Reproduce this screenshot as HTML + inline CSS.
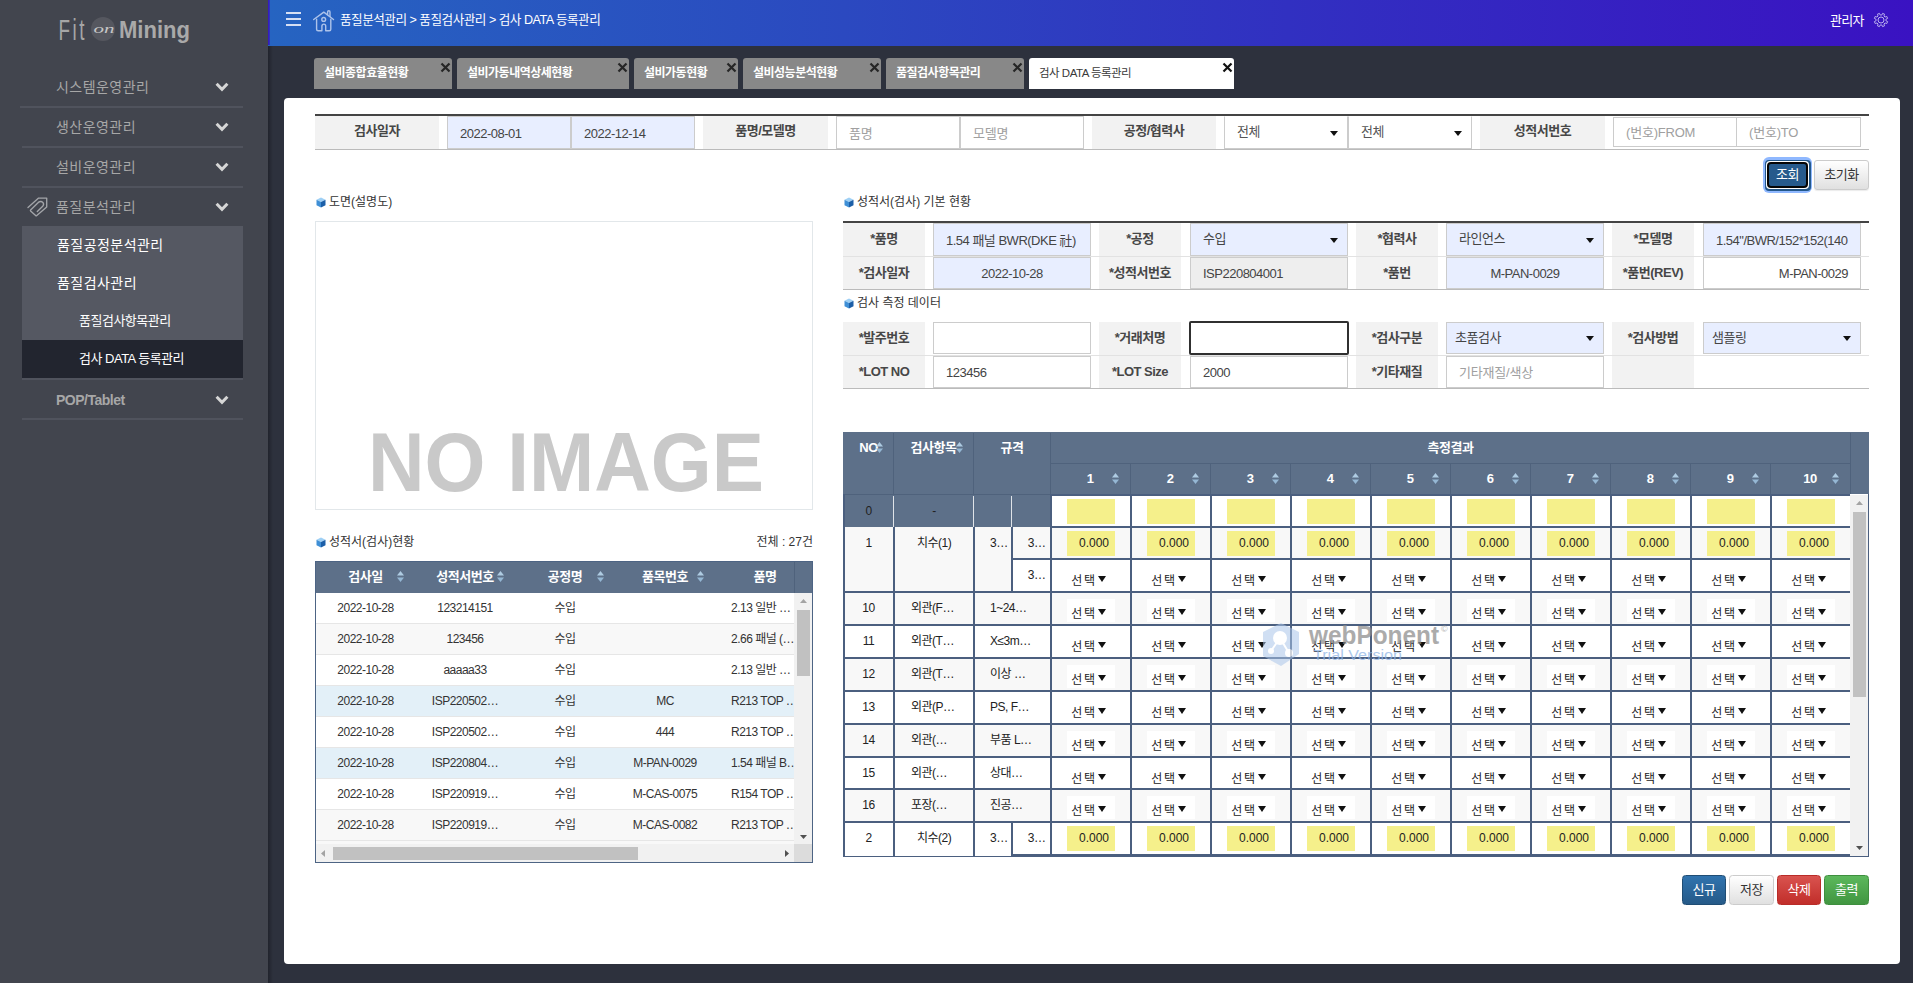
<!DOCTYPE html><html lang="ko"><head><meta charset="utf-8"><title>검사 DATA 등록관리</title><style>
*{box-sizing:border-box;margin:0;padding:0}
html,body{width:1913px;height:983px;overflow:hidden}
body{position:relative;background:#2d313d;font-family:"Liberation Sans","Noto Sans CJK KR",sans-serif;font-size:12px;color:#333;letter-spacing:-0.5px}
.a{position:absolute}
.sb{left:0;top:0;width:268px;height:983px;background:#42454e}
.mi{left:56px;font-size:14px;letter-spacing:0.45px;color:#a7a7a7;height:24px;line-height:24px;white-space:nowrap}
.sep{left:22px;width:221px;height:2px;background:#50535d}
.sm{left:22px;width:221px;background:#555862}
.smt{color:#fff;white-space:nowrap;height:24px;line-height:24px}
.hd{left:268px;top:0;width:1645px;height:46px;background:linear-gradient(90deg,#2664c1 0%,#2b49c0 35%,#3130c1 62%,#3a12c2 100%)}
.bc{color:#fff;font-size:12.6px;white-space:nowrap;line-height:20px;height:20px}
.tab{top:58px;height:31px;background:#888;border-radius:3px 3px 0 0;color:#fff;font-weight:bold;font-size:12px;line-height:30px;padding-left:10px;white-space:nowrap}
.tab.on{background:#fff;color:#3a3a3a;font-weight:normal;font-size:11.5px}
.tx{top:4px;right:1px}
.panel{left:284px;top:98px;width:1616px;height:866px;background:#fff;border-radius:4px}
.lb{background:#f2f2f2;font-weight:bold;color:#474747;text-align:center;white-space:nowrap;font-size:13px}
.in{border:1px solid #ccc;background:#fff;font-size:13px;color:#444;padding-left:12px;white-space:nowrap;overflow:hidden}
.in.b{background:#e8eeff}
.in.g{background:#eee}
.ph{color:#a0a0a0;letter-spacing:-0.2px}
.car{width:0;height:0;border-left:4px solid transparent;border-right:4px solid transparent;border-top:5px solid #111}
.st{font-size:12px;color:#333;white-space:nowrap;height:16px;line-height:16px;letter-spacing:0}
.btn{border-radius:3px;text-align:center;font-size:13px;white-space:nowrap}
.gh{background:#5d7089;color:#fff;font-weight:bold;text-align:center;white-space:nowrap;font-size:12px}
.c{text-align:center;white-space:nowrap;overflow:hidden;font-size:12px;color:#333}
.y{background:#f5f08b}
.ln{background:#4b5f7f}
</style></head><body>
<div class="a sb">
<svg class="a" style="left:50px;top:8px" width="160" height="44" viewBox="0 0 160 44"><text transform="translate(8.4,32) scale(0.65,1)" font-size="29" fill="#a6a6a6" style="letter-spacing:4px">Fit</text><circle cx="53" cy="21" r="12" fill="#55575f"/><text x="43.5" y="25" font-size="13" font-style="italic" font-family="Liberation Serif,serif" fill="#c6c6c6" textLength="21" lengthAdjust="spacingAndGlyphs" style="letter-spacing:0">on</text><text x="69" y="29.6" font-size="24" font-weight="bold" fill="#a9a9a9" textLength="71" lengthAdjust="spacingAndGlyphs" style="letter-spacing:0">Mining</text></svg>
<div class="a mi" style="top:75px">시스템운영관리</div>
<svg class="a" style="left:215px;top:82px" width="14" height="10" viewBox="0 0 14 10"><path d="M1.6 1.8 L7 7.4 L12.4 1.8" fill="none" stroke="#d6d6d6" stroke-width="3"/></svg>
<div class="a mi" style="top:115px">생산운영관리</div>
<svg class="a" style="left:215px;top:122px" width="14" height="10" viewBox="0 0 14 10"><path d="M1.6 1.8 L7 7.4 L12.4 1.8" fill="none" stroke="#d6d6d6" stroke-width="3"/></svg>
<div class="a mi" style="top:155px">설비운영관리</div>
<svg class="a" style="left:215px;top:162px" width="14" height="10" viewBox="0 0 14 10"><path d="M1.6 1.8 L7 7.4 L12.4 1.8" fill="none" stroke="#d6d6d6" stroke-width="3"/></svg>
<div class="a mi" style="top:195px">품질분석관리</div>
<svg class="a" style="left:215px;top:202px" width="14" height="10" viewBox="0 0 14 10"><path d="M1.6 1.8 L7 7.4 L12.4 1.8" fill="none" stroke="#d6d6d6" stroke-width="3"/></svg>
<div class="a sep" style="top:106px;left:20px;width:223px"></div>
<div class="a sep" style="top:146px"></div>
<div class="a sep" style="top:186px"></div>
<svg class="a" style="left:26px;top:196.4px" width="24" height="22" viewBox="0 0 24 22"><path fill="none" stroke="#a3a5a9" stroke-width="1.35" stroke-linejoin="round" stroke-linecap="round" d="M2 11.6 L12.6 2.1 H20.7 V10.9 L10.8 19.6 Q10.2 20.2 9.6 19.6 L4.6 15 Q4.2 14.5 4.6 14 L12.3 6.4 Q14.8 4.6 16.9 6.4 Q18.4 8.4 16.7 10.2 L11.3 15.5"/></svg>
<div class="a sm" style="top:226px;height:114px"></div>
<div class="a smt" style="left:57px;top:233px;font-size:14px;letter-spacing:0.45px">품질공정분석관리</div>
<div class="a smt" style="left:57px;top:271px;font-size:14px;letter-spacing:0.45px">품질검사관리</div>
<div class="a smt" style="left:79px;top:309px;font-size:13px">품질검사항목관리</div>
<div class="a" style="left:22px;top:340px;width:221px;height:38px;background:#22252f"></div>
<div class="a smt" style="left:79px;top:347px;font-size:13px">검사 DATA 등록관리</div>
<div class="a sep" style="top:378px"></div>
<div class="a mi" style="top:388px;font-weight:bold;font-size:14px;letter-spacing:-0.5px">POP/Tablet</div>
<svg class="a" style="left:215px;top:395px" width="14" height="10" viewBox="0 0 14 10"><path d="M1.6 1.8 L7 7.4 L12.4 1.8" fill="none" stroke="#d6d6d6" stroke-width="3"/></svg>
<div class="a sep" style="top:418px"></div>
</div>
<div class="a" style="left:268px;top:0;width:5px;height:983px;background:linear-gradient(90deg,rgba(0,0,0,.28),rgba(0,0,0,0))"></div>
<div class="a hd">
<div class="a" style="left:0;top:0;width:2px;height:45px;background:linear-gradient(90deg,#3a10c0,#2a3fbd)"></div>
<div class="a" style="left:18px;top:12px;width:15px;height:2px;background:#d6dff3"></div>
<div class="a" style="left:18px;top:18px;width:15px;height:2px;background:#d6dff3"></div>
<div class="a" style="left:18px;top:24px;width:15px;height:2px;background:#d6dff3"></div>
<svg class="a" style="left:44px;top:9px" width="24" height="24" viewBox="0 0 24 24"><g fill="none" stroke="#adc3ea" stroke-width="1.4" stroke-linejoin="round" stroke-linecap="round"><path d="M1.7 10.5 L11.8 3.1 L21.5 10.5"/><path d="M15.6 5.6 V3 a1.2 1.2 0 0 1 2.4 0 V7.4"/><path d="M4.6 10.2 V20.3 a1.5 1.5 0 0 0 1.5 1.5 H9.9 V17 a1.9 1.9 0 0 1 3.8 0 V21.8 H17.3 a1.5 1.5 0 0 0 1.5 -1.5 V10.2"/><circle cx="11.7" cy="10.4" r="1.9"/></g></svg>
<div class="a bc" style="left:72px;top:10px">품질분석관리 &gt; 품질검사관리 &gt; 검사 DATA 등록관리</div>
<div class="a bc" style="left:1562px;top:11px;font-size:13px;letter-spacing:-0.7px">관리자</div>
<svg class="a" style="left:1605.3px;top:11.8px" width="16" height="16" viewBox="0 0 16 16"><g fill="none" stroke="#b9aeee" stroke-width="1" stroke-linejoin="round"><circle cx="8" cy="8" r="3"/><path d="M12.94 8.78 L14.61 9.59 L13.80 11.55 L12.05 10.94 L10.94 12.05 L11.55 13.80 L9.59 14.61 L8.78 12.94 L7.22 12.94 L6.41 14.61 L4.45 13.80 L5.06 12.05 L3.95 10.94 L2.20 11.55 L1.39 9.59 L3.06 8.78 L3.06 7.22 L1.39 6.41 L2.20 4.45 L3.95 5.06 L5.06 3.95 L4.45 2.20 L6.41 1.39 L7.22 3.06 L8.78 3.06 L9.59 1.39 L11.55 2.20 L10.94 3.95 L12.05 5.06 L13.80 4.45 L14.61 6.41 L12.94 7.22Z"/></g></svg>
</div>
<div class="a tab" style="left:314px;width:138px">설비종합효율현황<svg class="a tx" width="11" height="11" viewBox="0 0 11 11"><path d="M1.5 1.5 L9.5 9.5 M9.5 1.5 L1.5 9.5" stroke="#262626" stroke-width="2.2" fill="none"/></svg></div>
<div class="a tab" style="left:457px;width:172px">설비가동내역상세현황<svg class="a tx" width="11" height="11" viewBox="0 0 11 11"><path d="M1.5 1.5 L9.5 9.5 M9.5 1.5 L1.5 9.5" stroke="#262626" stroke-width="2.2" fill="none"/></svg></div>
<div class="a tab" style="left:634px;width:104px">설비가동현황<svg class="a tx" width="11" height="11" viewBox="0 0 11 11"><path d="M1.5 1.5 L9.5 9.5 M9.5 1.5 L1.5 9.5" stroke="#262626" stroke-width="2.2" fill="none"/></svg></div>
<div class="a tab" style="left:743px;width:138px">설비성능분석현황<svg class="a tx" width="11" height="11" viewBox="0 0 11 11"><path d="M1.5 1.5 L9.5 9.5 M9.5 1.5 L1.5 9.5" stroke="#262626" stroke-width="2.2" fill="none"/></svg></div>
<div class="a tab" style="left:886px;width:138px">품질검사항목관리<svg class="a tx" width="11" height="11" viewBox="0 0 11 11"><path d="M1.5 1.5 L9.5 9.5 M9.5 1.5 L1.5 9.5" stroke="#262626" stroke-width="2.2" fill="none"/></svg></div>
<div class="a tab on" style="left:1029px;width:205px">검사 DATA 등록관리<svg class="a tx" width="11" height="11" viewBox="0 0 11 11"><path d="M1.5 1.5 L9.5 9.5 M9.5 1.5 L1.5 9.5" stroke="#111" stroke-width="2.2" fill="none"/></svg></div>
<div class="a panel"></div>
<div class="a" style="left:315px;top:114px;width:1554px;height:2px;background:#444"></div>
<div class="a" style="left:315px;top:149px;width:1554px;height:1px;background:#bbb"></div>
<div class="a lb" style="left:315px;top:116px;width:124px;height:33px;line-height:30px">검사일자</div>
<div class="a in b" style="left:447px;top:116px;width:124px;height:33px;line-height:33px;">2022-08-01</div>
<div class="a in b" style="left:571px;top:116px;width:124px;height:33px;line-height:33px;">2022-12-14</div>
<div class="a lb" style="left:703px;top:116px;width:125px;height:33px;line-height:30px">품명/모델명</div>
<div class="a in " style="left:836px;top:116px;width:124px;height:33px;line-height:33px;"><span class="ph">품명</span></div>
<div class="a in " style="left:960px;top:116px;width:124px;height:33px;line-height:33px;"><span class="ph">모델명</span></div>
<div class="a lb" style="left:1092px;top:116px;width:124px;height:33px;line-height:30px">공정/협력사</div>
<div class="a in " style="left:1224px;top:116px;width:124px;height:33px;line-height:30px;border-color:transparent #ccc #ccc #ccc;color:#555;">전체<span class="a car" style="right:9px;top:13.5px"></span></div>
<div class="a in " style="left:1348px;top:116px;width:124px;height:33px;line-height:30px;border-color:transparent #ccc #ccc #ccc;color:#555;">전체<span class="a car" style="right:9px;top:13.5px"></span></div>
<div class="a lb" style="left:1480px;top:116px;width:125px;height:33px;line-height:30px">성적서번호</div>
<div class="a in " style="left:1613px;top:117px;width:124px;height:30px;line-height:30px;"><span class="ph">(번호)FROM</span></div>
<div class="a in " style="left:1736px;top:117px;width:125px;height:30px;line-height:30px;"><span class="ph">(번호)TO</span></div>
<div class="a" style="left:1763px;top:157px;width:49px;height:35.5px;background:#8fb8ff;border-radius:6px"></div>
<div class="a" style="left:1765px;top:159.5px;width:45.5px;height:31px;background:#24588a;border-radius:4px"></div>
<div class="a" style="left:1766px;top:161px;width:43px;height:28px;background:#fff;border-radius:4px"></div>
<div class="a btn" style="left:1767px;top:162px;width:41px;height:26px;background:#265a8c;border:2px solid #050505;border-radius:4px;color:#fff;line-height:22px">조회</div>
<div class="a btn" style="left:1814px;top:160px;width:55px;height:30px;background:linear-gradient(#fff,#e0e0e0);border:1px solid #ccc;color:#333;line-height:28px;box-shadow:0 1px 1px rgba(0,0,0,.08)">초기화</div>
<svg class="a" style="left:316px;top:197px" width="10" height="11" viewBox="0 0 10 11"><path d="M5 0.5 L9.5 2.7 L5 5 L0.5 2.7Z" fill="#9fd0f5"/><path d="M0.5 2.7 L5 5 V10.5 L0.5 8.2Z" fill="#3f8fd6"/><path d="M9.5 2.7 L5 5 V10.5 L9.5 8.2Z" fill="#1c5fa8"/></svg>
<div class="a st" style="left:329px;top:194px">도면(설명도)</div>
<div class="a" style="left:315px;top:221px;width:498px;height:289px;border:1px solid #e2e7ea"></div>
<svg class="a" style="left:360px;top:425px" width="412" height="74" viewBox="0 0 412 74"><text x="8" y="65.5" font-size="84" font-weight="bold" fill="#c9c9c9" textLength="396" lengthAdjust="spacingAndGlyphs" style="letter-spacing:0">NO IMAGE</text></svg>
<svg class="a" style="left:316px;top:537px" width="10" height="11" viewBox="0 0 10 11"><path d="M5 0.5 L9.5 2.7 L5 5 L0.5 2.7Z" fill="#9fd0f5"/><path d="M0.5 2.7 L5 5 V10.5 L0.5 8.2Z" fill="#3f8fd6"/><path d="M9.5 2.7 L5 5 V10.5 L9.5 8.2Z" fill="#1c5fa8"/></svg>
<div class="a st" style="left:329px;top:534px">성적서(검사)현황</div>
<div class="a st" style="left:713px;top:534px;width:100px;text-align:right">전체 : 27건</div>
<div class="a" style="left:315px;top:561px;width:498px;height:302px;background:#fff;border:1px solid #4d6484"></div>
<div class="a gh" style="left:316px;top:562px;width:496px;height:31px"></div>
<div class="a gh" style="left:316px;top:562px;width:100px;height:31px;line-height:30px;border-right:1px solid #4f627c;font-size:13px">검사일</div>
<div class="a gh" style="left:415px;top:562px;width:101px;height:31px;line-height:30px;border-right:1px solid #4f627c;font-size:13px">성적서번호</div>
<div class="a gh" style="left:515px;top:562px;width:101px;height:31px;line-height:30px;border-right:1px solid #4f627c;font-size:13px">공정명</div>
<div class="a gh" style="left:615px;top:562px;width:101px;height:31px;line-height:30px;border-right:1px solid #4f627c;font-size:13px">품목번호</div>
<div class="a gh" style="left:715px;top:562px;width:80px;height:31px;line-height:30px;border-right:1px solid #4f627c;font-size:13px;overflow:hidden"><div style="width:100px">품명</div></div>
<svg class="a" style="left:397px;top:571px" width="7" height="11" viewBox="0 0 7 11"><path d="M3.5 0 L7 4.5 H0Z" fill="#aecbe2"/><path d="M3.5 11 L7 6.5 H0Z" fill="#95b7d4"/></svg>
<svg class="a" style="left:497px;top:571px" width="7" height="11" viewBox="0 0 7 11"><path d="M3.5 0 L7 4.5 H0Z" fill="#aecbe2"/><path d="M3.5 11 L7 6.5 H0Z" fill="#95b7d4"/></svg>
<svg class="a" style="left:597px;top:571px" width="7" height="11" viewBox="0 0 7 11"><path d="M3.5 0 L7 4.5 H0Z" fill="#aecbe2"/><path d="M3.5 11 L7 6.5 H0Z" fill="#95b7d4"/></svg>
<svg class="a" style="left:697px;top:571px" width="7" height="11" viewBox="0 0 7 11"><path d="M3.5 0 L7 4.5 H0Z" fill="#aecbe2"/><path d="M3.5 11 L7 6.5 H0Z" fill="#95b7d4"/></svg>
<div class="a" style="left:316px;top:593px;width:478px;height:31px;background:#fff;border-bottom:1px solid #e6e6e6"></div>
<div class="a c" style="left:316px;top:593px;width:99px;height:30px;line-height:31px">2022-10-28</div>
<div class="a c" style="left:415px;top:593px;width:100px;height:30px;line-height:31px">123214151</div>
<div class="a c" style="left:515px;top:593px;width:100px;height:30px;line-height:31px">수입</div>
<div class="a c" style="left:715px;top:593px;width:79px;height:30px;line-height:31px;text-align:left;padding-left:16px">2.13 일반 …</div>
<div class="a" style="left:316px;top:624px;width:478px;height:31px;background:#f8f8f8;border-bottom:1px solid #e6e6e6"></div>
<div class="a c" style="left:316px;top:624px;width:99px;height:30px;line-height:31px">2022-10-28</div>
<div class="a c" style="left:415px;top:624px;width:100px;height:30px;line-height:31px">123456</div>
<div class="a c" style="left:515px;top:624px;width:100px;height:30px;line-height:31px">수입</div>
<div class="a c" style="left:715px;top:624px;width:79px;height:30px;line-height:31px;text-align:left;padding-left:16px">2.66 패널 (…</div>
<div class="a" style="left:316px;top:655px;width:478px;height:31px;background:#fff;border-bottom:1px solid #e6e6e6"></div>
<div class="a c" style="left:316px;top:655px;width:99px;height:30px;line-height:31px">2022-10-28</div>
<div class="a c" style="left:415px;top:655px;width:100px;height:30px;line-height:31px">aaaaa33</div>
<div class="a c" style="left:515px;top:655px;width:100px;height:30px;line-height:31px">수입</div>
<div class="a c" style="left:715px;top:655px;width:79px;height:30px;line-height:31px;text-align:left;padding-left:16px">2.13 일반 …</div>
<div class="a" style="left:316px;top:686px;width:478px;height:31px;background:#e3f0f8;border-bottom:1px solid #e6e6e6"></div>
<div class="a c" style="left:316px;top:686px;width:99px;height:30px;line-height:31px">2022-10-28</div>
<div class="a c" style="left:415px;top:686px;width:100px;height:30px;line-height:31px">ISP220502…</div>
<div class="a c" style="left:515px;top:686px;width:100px;height:30px;line-height:31px">수입</div>
<div class="a c" style="left:615px;top:686px;width:100px;height:30px;line-height:31px">MC</div>
<div class="a c" style="left:715px;top:686px;width:79px;height:30px;line-height:31px;text-align:left;padding-left:16px">R213 TOP …</div>
<div class="a" style="left:316px;top:717px;width:478px;height:31px;background:#fff;border-bottom:1px solid #e6e6e6"></div>
<div class="a c" style="left:316px;top:717px;width:99px;height:30px;line-height:31px">2022-10-28</div>
<div class="a c" style="left:415px;top:717px;width:100px;height:30px;line-height:31px">ISP220502…</div>
<div class="a c" style="left:515px;top:717px;width:100px;height:30px;line-height:31px">수입</div>
<div class="a c" style="left:615px;top:717px;width:100px;height:30px;line-height:31px">444</div>
<div class="a c" style="left:715px;top:717px;width:79px;height:30px;line-height:31px;text-align:left;padding-left:16px">R213 TOP …</div>
<div class="a" style="left:316px;top:748px;width:478px;height:31px;background:#e3f0f8;border-bottom:1px solid #e6e6e6"></div>
<div class="a c" style="left:316px;top:748px;width:99px;height:30px;line-height:31px">2022-10-28</div>
<div class="a c" style="left:415px;top:748px;width:100px;height:30px;line-height:31px">ISP220804…</div>
<div class="a c" style="left:515px;top:748px;width:100px;height:30px;line-height:31px">수입</div>
<div class="a c" style="left:615px;top:748px;width:100px;height:30px;line-height:31px">M-PAN-0029</div>
<div class="a c" style="left:715px;top:748px;width:79px;height:30px;line-height:31px;text-align:left;padding-left:16px">1.54 패널 B…</div>
<div class="a" style="left:316px;top:779px;width:478px;height:31px;background:#fff;border-bottom:1px solid #e6e6e6"></div>
<div class="a c" style="left:316px;top:779px;width:99px;height:30px;line-height:31px">2022-10-28</div>
<div class="a c" style="left:415px;top:779px;width:100px;height:30px;line-height:31px">ISP220919…</div>
<div class="a c" style="left:515px;top:779px;width:100px;height:30px;line-height:31px">수입</div>
<div class="a c" style="left:615px;top:779px;width:100px;height:30px;line-height:31px">M-CAS-0075</div>
<div class="a c" style="left:715px;top:779px;width:79px;height:30px;line-height:31px;text-align:left;padding-left:16px">R154 TOP …</div>
<div class="a" style="left:316px;top:810px;width:478px;height:31px;background:#f8f8f8;border-bottom:1px solid #e6e6e6"></div>
<div class="a c" style="left:316px;top:810px;width:99px;height:30px;line-height:31px">2022-10-28</div>
<div class="a c" style="left:415px;top:810px;width:100px;height:30px;line-height:31px">ISP220919…</div>
<div class="a c" style="left:515px;top:810px;width:100px;height:30px;line-height:31px">수입</div>
<div class="a c" style="left:615px;top:810px;width:100px;height:30px;line-height:31px">M-CAS-0082</div>
<div class="a c" style="left:715px;top:810px;width:79px;height:30px;line-height:31px;text-align:left;padding-left:16px">R213 TOP …</div>
<div class="a" style="left:316px;top:841px;width:478px;height:3px;background:#f8f8f8"></div>
<div class="a" style="left:794px;top:593px;width:18px;height:251px;background:#f1f1f1"></div>
<div class="a" style="left:797px;top:610px;width:13px;height:66px;background:#c1c1c1"></div>
<div class="a" style="left:316px;top:844px;width:496px;height:18px;background:#f1f1f1"></div>
<div class="a" style="left:794px;top:844px;width:18px;height:18px;background:#dcdcdc"></div>
<div class="a" style="left:333px;top:847px;width:305px;height:13px;background:#c1c1c1"></div>
<svg class="a" style="left:799px;top:597px" width="9" height="9" viewBox="0 0 9 9"><path d="M4.5 2 L8 6 H1Z" fill="#a3a3a3"/></svg>
<svg class="a" style="left:799px;top:832px" width="9" height="9" viewBox="0 0 9 9"><path d="M4.5 7 L8 3 H1Z" fill="#505050"/></svg>
<svg class="a" style="left:319px;top:849px" width="9" height="9" viewBox="0 0 9 9"><path d="M2 4.5 L6 1 V8Z" fill="#a3a3a3"/></svg>
<svg class="a" style="left:782px;top:849px" width="9" height="9" viewBox="0 0 9 9"><path d="M7 4.5 L3 1 V8Z" fill="#505050"/></svg>
<svg class="a" style="left:844px;top:197px" width="10" height="11" viewBox="0 0 10 11"><path d="M5 0.5 L9.5 2.7 L5 5 L0.5 2.7Z" fill="#9fd0f5"/><path d="M0.5 2.7 L5 5 V10.5 L0.5 8.2Z" fill="#3f8fd6"/><path d="M9.5 2.7 L5 5 V10.5 L9.5 8.2Z" fill="#1c5fa8"/></svg>
<div class="a st" style="left:857px;top:194px">성적서(검사) 기본 현황</div>
<div class="a" style="left:843px;top:221px;width:1026px;height:2px;background:#444"></div>
<div class="a" style="left:843px;top:256px;width:1026px;height:1px;background:#e2e2e2"></div>
<div class="a" style="left:843px;top:289px;width:1026px;height:1px;background:#bbb"></div>
<div class="a lb" style="left:843px;top:223px;width:82px;height:33px;line-height:32px">*품명</div>
<div class="a lb" style="left:1099px;top:223px;width:82px;height:33px;line-height:32px">*공정</div>
<div class="a lb" style="left:1356px;top:223px;width:82px;height:33px;line-height:32px">*협력사</div>
<div class="a lb" style="left:1612px;top:223px;width:82px;height:33px;line-height:32px">*모델명</div>
<div class="a lb" style="left:843px;top:257px;width:82px;height:32px;line-height:31px">*검사일자</div>
<div class="a lb" style="left:1099px;top:257px;width:82px;height:32px;line-height:31px">*성적서번호</div>
<div class="a lb" style="left:1356px;top:257px;width:82px;height:32px;line-height:31px">*품번</div>
<div class="a lb" style="left:1612px;top:257px;width:82px;height:32px;line-height:31px">*품번(REV)</div>
<div class="a in b" style="left:933px;top:223px;width:158px;height:33px;line-height:33px;">1.54 패널 BWR(DKE 社)</div>
<div class="a in b" style="left:1190px;top:223px;width:158px;height:33px;line-height:30px;">수입<span class="a car" style="right:9px;top:13.5px"></span></div>
<div class="a in b" style="left:1446px;top:223px;width:158px;height:33px;line-height:30px;">라인언스<span class="a car" style="right:9px;top:13.5px"></span></div>
<div class="a in b" style="left:1703px;top:223px;width:158px;height:33px;line-height:33px;">1.54"/BWR/152*152(140</div>
<div class="a in b" style="left:933px;top:257px;width:158px;height:32px;line-height:32px;text-align:center;padding-left:0;">2022-10-28</div>
<div class="a in g" style="left:1190px;top:257px;width:158px;height:32px;line-height:32px;">ISP220804001</div>
<div class="a in b" style="left:1446px;top:257px;width:158px;height:32px;line-height:32px;text-align:center;padding-left:0;">M-PAN-0029</div>
<div class="a in " style="left:1703px;top:257px;width:158px;height:32px;line-height:32px;text-align:right;padding-left:0;padding-right:12px;">M-PAN-0029</div>
<svg class="a" style="left:844px;top:298px" width="10" height="11" viewBox="0 0 10 11"><path d="M5 0.5 L9.5 2.7 L5 5 L0.5 2.7Z" fill="#9fd0f5"/><path d="M0.5 2.7 L5 5 V10.5 L0.5 8.2Z" fill="#3f8fd6"/><path d="M9.5 2.7 L5 5 V10.5 L9.5 8.2Z" fill="#1c5fa8"/></svg>
<div class="a st" style="left:857px;top:295px">검사 측정 데이터</div>
<div class="a" style="left:843px;top:355px;width:1026px;height:1px;background:#e2e2e2"></div>
<div class="a" style="left:843px;top:388px;width:1026px;height:1px;background:#bbb"></div>
<div class="a lb" style="left:843px;top:322px;width:82px;height:33px;line-height:32px">*발주번호</div>
<div class="a lb" style="left:1099px;top:322px;width:82px;height:33px;line-height:32px">*거래처명</div>
<div class="a lb" style="left:1356px;top:322px;width:82px;height:33px;line-height:32px">*검사구분</div>
<div class="a lb" style="left:1612px;top:322px;width:82px;height:33px;line-height:32px">*검사방법</div>
<div class="a lb" style="left:843px;top:356px;width:82px;height:32px;line-height:31px">*LOT NO</div>
<div class="a lb" style="left:1099px;top:356px;width:82px;height:32px;line-height:31px">*LOT Size</div>
<div class="a lb" style="left:1356px;top:356px;width:82px;height:32px;line-height:31px">*기타재질</div>
<div class="a lb" style="left:1612px;top:356px;width:82px;height:32px;line-height:31px"></div>
<div class="a in " style="left:933px;top:322px;width:158px;height:32px;line-height:32px;"></div>
<div class="a in " style="left:1189px;top:321px;width:160px;height:34px;line-height:34px;border:2px solid #303030;border-radius:2px;"></div>
<div class="a in b" style="left:1446px;top:322px;width:158px;height:32px;line-height:29px;padding-left:8px;">초품검사<span class="a car" style="right:9px;top:13px"></span></div>
<div class="a in b" style="left:1703px;top:322px;width:158px;height:32px;line-height:29px;padding-left:8px;">샘플링<span class="a car" style="right:9px;top:13px"></span></div>
<div class="a in " style="left:933px;top:356px;width:158px;height:32px;line-height:32px;">123456</div>
<div class="a in " style="left:1190px;top:356px;width:158px;height:32px;line-height:32px;">2000</div>
<div class="a in " style="left:1446px;top:356px;width:158px;height:32px;line-height:32px;"><span class="ph">기타재질/색상</span></div>
<div class="a" style="left:843px;top:432px;width:1026px;height:425px;background:#fff;border:1px solid #4b5f7f;border-left-width:2px"></div>
<div class="a gh" style="left:843px;top:432px;width:1026px;height:62px"></div>
<div class="a gh" style="left:844px;top:433px;width:49px;height:30px;line-height:30px;font-size:13px">NO</div>
<div class="a gh" style="left:894px;top:433px;width:79px;height:30px;line-height:30px;font-size:13px">검사항목</div>
<div class="a gh" style="left:974px;top:433px;width:76px;height:30px;line-height:30px;font-size:13px">규격</div>
<div class="a gh" style="left:1051px;top:433px;width:799px;height:30px;line-height:30px;font-size:13px">측정결과</div>
<svg class="a" style="left:876px;top:442px" width="7" height="11" viewBox="0 0 7 11"><path d="M3.5 0 L7 4.5 H0Z" fill="#aecbe2"/><path d="M3.5 11 L7 6.5 H0Z" fill="#95b7d4"/></svg>
<svg class="a" style="left:955.5px;top:442px" width="7" height="11" viewBox="0 0 7 11"><path d="M3.5 0 L7 4.5 H0Z" fill="#aecbe2"/><path d="M3.5 11 L7 6.5 H0Z" fill="#95b7d4"/></svg>
<div class="a" style="left:893px;top:433px;width:1px;height:61px;background:#4f627c"></div>
<div class="a" style="left:973px;top:433px;width:1px;height:61px;background:#4f627c"></div>
<div class="a" style="left:1050px;top:433px;width:1px;height:61px;background:#4f627c"></div>
<div class="a" style="left:1850px;top:433px;width:1px;height:61px;background:#4f627c"></div>
<div class="a" style="left:1051px;top:463px;width:800px;height:1px;background:#4f627c"></div>
<div class="a gh" style="left:1075px;top:464px;width:30px;height:30px;line-height:29px;font-size:13px;background:none">1</div>
<svg class="a" style="left:1112px;top:473px" width="7" height="11" viewBox="0 0 7 11"><path d="M3.5 0 L7 4.5 H0Z" fill="#aecbe2"/><path d="M3.5 11 L7 6.5 H0Z" fill="#95b7d4"/></svg>
<div class="a" style="left:1130px;top:464px;width:1px;height:30px;background:#4f627c"></div>
<div class="a gh" style="left:1155px;top:464px;width:30px;height:30px;line-height:29px;font-size:13px;background:none">2</div>
<svg class="a" style="left:1192px;top:473px" width="7" height="11" viewBox="0 0 7 11"><path d="M3.5 0 L7 4.5 H0Z" fill="#aecbe2"/><path d="M3.5 11 L7 6.5 H0Z" fill="#95b7d4"/></svg>
<div class="a" style="left:1210px;top:464px;width:1px;height:30px;background:#4f627c"></div>
<div class="a gh" style="left:1235px;top:464px;width:30px;height:30px;line-height:29px;font-size:13px;background:none">3</div>
<svg class="a" style="left:1272px;top:473px" width="7" height="11" viewBox="0 0 7 11"><path d="M3.5 0 L7 4.5 H0Z" fill="#aecbe2"/><path d="M3.5 11 L7 6.5 H0Z" fill="#95b7d4"/></svg>
<div class="a" style="left:1290px;top:464px;width:1px;height:30px;background:#4f627c"></div>
<div class="a gh" style="left:1315px;top:464px;width:30px;height:30px;line-height:29px;font-size:13px;background:none">4</div>
<svg class="a" style="left:1352px;top:473px" width="7" height="11" viewBox="0 0 7 11"><path d="M3.5 0 L7 4.5 H0Z" fill="#aecbe2"/><path d="M3.5 11 L7 6.5 H0Z" fill="#95b7d4"/></svg>
<div class="a" style="left:1370px;top:464px;width:1px;height:30px;background:#4f627c"></div>
<div class="a gh" style="left:1395px;top:464px;width:30px;height:30px;line-height:29px;font-size:13px;background:none">5</div>
<svg class="a" style="left:1432px;top:473px" width="7" height="11" viewBox="0 0 7 11"><path d="M3.5 0 L7 4.5 H0Z" fill="#aecbe2"/><path d="M3.5 11 L7 6.5 H0Z" fill="#95b7d4"/></svg>
<div class="a" style="left:1450px;top:464px;width:1px;height:30px;background:#4f627c"></div>
<div class="a gh" style="left:1475px;top:464px;width:30px;height:30px;line-height:29px;font-size:13px;background:none">6</div>
<svg class="a" style="left:1512px;top:473px" width="7" height="11" viewBox="0 0 7 11"><path d="M3.5 0 L7 4.5 H0Z" fill="#aecbe2"/><path d="M3.5 11 L7 6.5 H0Z" fill="#95b7d4"/></svg>
<div class="a" style="left:1530px;top:464px;width:1px;height:30px;background:#4f627c"></div>
<div class="a gh" style="left:1555px;top:464px;width:30px;height:30px;line-height:29px;font-size:13px;background:none">7</div>
<svg class="a" style="left:1592px;top:473px" width="7" height="11" viewBox="0 0 7 11"><path d="M3.5 0 L7 4.5 H0Z" fill="#aecbe2"/><path d="M3.5 11 L7 6.5 H0Z" fill="#95b7d4"/></svg>
<div class="a" style="left:1610px;top:464px;width:1px;height:30px;background:#4f627c"></div>
<div class="a gh" style="left:1635px;top:464px;width:30px;height:30px;line-height:29px;font-size:13px;background:none">8</div>
<svg class="a" style="left:1672px;top:473px" width="7" height="11" viewBox="0 0 7 11"><path d="M3.5 0 L7 4.5 H0Z" fill="#aecbe2"/><path d="M3.5 11 L7 6.5 H0Z" fill="#95b7d4"/></svg>
<div class="a" style="left:1690px;top:464px;width:1px;height:30px;background:#4f627c"></div>
<div class="a gh" style="left:1715px;top:464px;width:30px;height:30px;line-height:29px;font-size:13px;background:none">9</div>
<svg class="a" style="left:1752px;top:473px" width="7" height="11" viewBox="0 0 7 11"><path d="M3.5 0 L7 4.5 H0Z" fill="#aecbe2"/><path d="M3.5 11 L7 6.5 H0Z" fill="#95b7d4"/></svg>
<div class="a" style="left:1770px;top:464px;width:1px;height:30px;background:#4f627c"></div>
<div class="a gh" style="left:1795px;top:464px;width:30px;height:30px;line-height:29px;font-size:13px;background:none">10</div>
<svg class="a" style="left:1832px;top:473px" width="7" height="11" viewBox="0 0 7 11"><path d="M3.5 0 L7 4.5 H0Z" fill="#aecbe2"/><path d="M3.5 11 L7 6.5 H0Z" fill="#95b7d4"/></svg>
<div class="a" style="left:845px;top:494px;width:205px;height:33px;background:#5d7089"></div>
<div class="a" style="left:845px;top:494px;width:205px;height:1px;background:#4f627c"></div>
<div class="a" style="left:893px;top:496px;width:1px;height:31px;background:#dfe3e8"></div>
<div class="a" style="left:973px;top:496px;width:1px;height:31px;background:#dfe3e8"></div>
<div class="a" style="left:1011px;top:496px;width:1px;height:31px;background:#dfe3e8"></div>
<div class="a" style="left:845px;top:527px;width:1005px;height:32px;background:#f8f8f8"></div>
<div class="a" style="left:845px;top:559px;width:166px;height:33px;background:#f8f8f8"></div>
<div class="a" style="left:845px;top:592px;width:1005px;height:33px;background:#f8f8f8"></div>
<div class="a" style="left:845px;top:658px;width:1005px;height:33px;background:#f8f8f8"></div>
<div class="a" style="left:845px;top:724px;width:1005px;height:33px;background:#f8f8f8"></div>
<div class="a" style="left:845px;top:789px;width:1005px;height:33px;background:#f8f8f8"></div>
<div class="a ln" style="left:1050px;top:494px;width:800px;height:2px"></div>
<div class="a ln" style="left:1050px;top:526px;width:800px;height:2px"></div>
<div class="a ln" style="left:1011px;top:558px;width:839px;height:2px"></div>
<div class="a ln" style="left:845px;top:591px;width:1005px;height:2px"></div>
<div class="a ln" style="left:845px;top:624px;width:1005px;height:2px"></div>
<div class="a ln" style="left:845px;top:657px;width:1005px;height:2px"></div>
<div class="a ln" style="left:845px;top:690px;width:1005px;height:2px"></div>
<div class="a ln" style="left:845px;top:723px;width:1005px;height:2px"></div>
<div class="a ln" style="left:845px;top:756px;width:1005px;height:2px"></div>
<div class="a ln" style="left:845px;top:788px;width:1005px;height:2px"></div>
<div class="a ln" style="left:845px;top:821px;width:1005px;height:2px"></div>
<div class="a ln" style="left:1011px;top:854px;width:839px;height:2px"></div>
<div class="a ln" style="left:1050px;top:494px;width:2px;height:362px"></div>
<div class="a ln" style="left:1130px;top:494px;width:2px;height:362px"></div>
<div class="a ln" style="left:1210px;top:494px;width:2px;height:362px"></div>
<div class="a ln" style="left:1290px;top:494px;width:2px;height:362px"></div>
<div class="a ln" style="left:1370px;top:494px;width:2px;height:362px"></div>
<div class="a ln" style="left:1450px;top:494px;width:2px;height:362px"></div>
<div class="a ln" style="left:1530px;top:494px;width:2px;height:362px"></div>
<div class="a ln" style="left:1610px;top:494px;width:2px;height:362px"></div>
<div class="a ln" style="left:1690px;top:494px;width:2px;height:362px"></div>
<div class="a ln" style="left:1770px;top:494px;width:2px;height:362px"></div>
<div class="a ln" style="left:893px;top:527px;width:2px;height:329px"></div>
<div class="a ln" style="left:973px;top:527px;width:2px;height:329px"></div>
<div class="a ln" style="left:1011px;top:527px;width:2px;height:64px"></div>
<div class="a ln" style="left:1011px;top:823px;width:2px;height:33px"></div>
<div class="a c y" style="left:1067px;top:499px;width:48px;height:25px;line-height:25px;text-align:right;padding-right:6px;color:#222;letter-spacing:0"></div>
<div class="a c y" style="left:1067px;top:531px;width:48px;height:25px;line-height:25px;text-align:right;padding-right:6px;color:#222;letter-spacing:0">0.000</div>
<div class="a c" style="left:1067px;top:572px;width:34px;height:18px;line-height:18px;color:#222;font-size:12px;letter-spacing:1.6px;overflow:visible">선택</div>
<span class="a car" style="left:1098px;top:576px;border-top-width:6px;border-left-width:4.5px;border-right-width:4.5px"></span>
<div class="a" style="left:1067px;top:599px;width:48px;height:23px;background:#fff"></div>
<div class="a c" style="left:1067px;top:605px;width:34px;height:18px;line-height:18px;color:#222;font-size:12px;letter-spacing:1.6px;overflow:visible">선택</div>
<span class="a car" style="left:1098px;top:609px;border-top-width:6px;border-left-width:4.5px;border-right-width:4.5px"></span>
<div class="a c" style="left:1067px;top:638px;width:34px;height:18px;line-height:18px;color:#222;font-size:12px;letter-spacing:1.6px;overflow:visible">선택</div>
<span class="a car" style="left:1098px;top:642px;border-top-width:6px;border-left-width:4.5px;border-right-width:4.5px"></span>
<div class="a" style="left:1067px;top:665px;width:48px;height:23px;background:#fff"></div>
<div class="a c" style="left:1067px;top:671px;width:34px;height:18px;line-height:18px;color:#222;font-size:12px;letter-spacing:1.6px;overflow:visible">선택</div>
<span class="a car" style="left:1098px;top:675px;border-top-width:6px;border-left-width:4.5px;border-right-width:4.5px"></span>
<div class="a c" style="left:1067px;top:704px;width:34px;height:18px;line-height:18px;color:#222;font-size:12px;letter-spacing:1.6px;overflow:visible">선택</div>
<span class="a car" style="left:1098px;top:708px;border-top-width:6px;border-left-width:4.5px;border-right-width:4.5px"></span>
<div class="a" style="left:1067px;top:731px;width:48px;height:23px;background:#fff"></div>
<div class="a c" style="left:1067px;top:737px;width:34px;height:18px;line-height:18px;color:#222;font-size:12px;letter-spacing:1.6px;overflow:visible">선택</div>
<span class="a car" style="left:1098px;top:741px;border-top-width:6px;border-left-width:4.5px;border-right-width:4.5px"></span>
<div class="a c" style="left:1067px;top:770px;width:34px;height:18px;line-height:18px;color:#222;font-size:12px;letter-spacing:1.6px;overflow:visible">선택</div>
<span class="a car" style="left:1098px;top:774px;border-top-width:6px;border-left-width:4.5px;border-right-width:4.5px"></span>
<div class="a" style="left:1067px;top:796px;width:48px;height:23px;background:#fff"></div>
<div class="a c" style="left:1067px;top:802px;width:34px;height:18px;line-height:18px;color:#222;font-size:12px;letter-spacing:1.6px;overflow:visible">선택</div>
<span class="a car" style="left:1098px;top:806px;border-top-width:6px;border-left-width:4.5px;border-right-width:4.5px"></span>
<div class="a c y" style="left:1067px;top:826px;width:48px;height:25px;line-height:25px;text-align:right;padding-right:6px;color:#222;letter-spacing:0">0.000</div>
<div class="a c y" style="left:1147px;top:499px;width:48px;height:25px;line-height:25px;text-align:right;padding-right:6px;color:#222;letter-spacing:0"></div>
<div class="a c y" style="left:1147px;top:531px;width:48px;height:25px;line-height:25px;text-align:right;padding-right:6px;color:#222;letter-spacing:0">0.000</div>
<div class="a c" style="left:1147px;top:572px;width:34px;height:18px;line-height:18px;color:#222;font-size:12px;letter-spacing:1.6px;overflow:visible">선택</div>
<span class="a car" style="left:1178px;top:576px;border-top-width:6px;border-left-width:4.5px;border-right-width:4.5px"></span>
<div class="a" style="left:1147px;top:599px;width:48px;height:23px;background:#fff"></div>
<div class="a c" style="left:1147px;top:605px;width:34px;height:18px;line-height:18px;color:#222;font-size:12px;letter-spacing:1.6px;overflow:visible">선택</div>
<span class="a car" style="left:1178px;top:609px;border-top-width:6px;border-left-width:4.5px;border-right-width:4.5px"></span>
<div class="a c" style="left:1147px;top:638px;width:34px;height:18px;line-height:18px;color:#222;font-size:12px;letter-spacing:1.6px;overflow:visible">선택</div>
<span class="a car" style="left:1178px;top:642px;border-top-width:6px;border-left-width:4.5px;border-right-width:4.5px"></span>
<div class="a" style="left:1147px;top:665px;width:48px;height:23px;background:#fff"></div>
<div class="a c" style="left:1147px;top:671px;width:34px;height:18px;line-height:18px;color:#222;font-size:12px;letter-spacing:1.6px;overflow:visible">선택</div>
<span class="a car" style="left:1178px;top:675px;border-top-width:6px;border-left-width:4.5px;border-right-width:4.5px"></span>
<div class="a c" style="left:1147px;top:704px;width:34px;height:18px;line-height:18px;color:#222;font-size:12px;letter-spacing:1.6px;overflow:visible">선택</div>
<span class="a car" style="left:1178px;top:708px;border-top-width:6px;border-left-width:4.5px;border-right-width:4.5px"></span>
<div class="a" style="left:1147px;top:731px;width:48px;height:23px;background:#fff"></div>
<div class="a c" style="left:1147px;top:737px;width:34px;height:18px;line-height:18px;color:#222;font-size:12px;letter-spacing:1.6px;overflow:visible">선택</div>
<span class="a car" style="left:1178px;top:741px;border-top-width:6px;border-left-width:4.5px;border-right-width:4.5px"></span>
<div class="a c" style="left:1147px;top:770px;width:34px;height:18px;line-height:18px;color:#222;font-size:12px;letter-spacing:1.6px;overflow:visible">선택</div>
<span class="a car" style="left:1178px;top:774px;border-top-width:6px;border-left-width:4.5px;border-right-width:4.5px"></span>
<div class="a" style="left:1147px;top:796px;width:48px;height:23px;background:#fff"></div>
<div class="a c" style="left:1147px;top:802px;width:34px;height:18px;line-height:18px;color:#222;font-size:12px;letter-spacing:1.6px;overflow:visible">선택</div>
<span class="a car" style="left:1178px;top:806px;border-top-width:6px;border-left-width:4.5px;border-right-width:4.5px"></span>
<div class="a c y" style="left:1147px;top:826px;width:48px;height:25px;line-height:25px;text-align:right;padding-right:6px;color:#222;letter-spacing:0">0.000</div>
<div class="a c y" style="left:1227px;top:499px;width:48px;height:25px;line-height:25px;text-align:right;padding-right:6px;color:#222;letter-spacing:0"></div>
<div class="a c y" style="left:1227px;top:531px;width:48px;height:25px;line-height:25px;text-align:right;padding-right:6px;color:#222;letter-spacing:0">0.000</div>
<div class="a c" style="left:1227px;top:572px;width:34px;height:18px;line-height:18px;color:#222;font-size:12px;letter-spacing:1.6px;overflow:visible">선택</div>
<span class="a car" style="left:1258px;top:576px;border-top-width:6px;border-left-width:4.5px;border-right-width:4.5px"></span>
<div class="a" style="left:1227px;top:599px;width:48px;height:23px;background:#fff"></div>
<div class="a c" style="left:1227px;top:605px;width:34px;height:18px;line-height:18px;color:#222;font-size:12px;letter-spacing:1.6px;overflow:visible">선택</div>
<span class="a car" style="left:1258px;top:609px;border-top-width:6px;border-left-width:4.5px;border-right-width:4.5px"></span>
<div class="a c" style="left:1227px;top:638px;width:34px;height:18px;line-height:18px;color:#222;font-size:12px;letter-spacing:1.6px;overflow:visible">선택</div>
<span class="a car" style="left:1258px;top:642px;border-top-width:6px;border-left-width:4.5px;border-right-width:4.5px"></span>
<div class="a" style="left:1227px;top:665px;width:48px;height:23px;background:#fff"></div>
<div class="a c" style="left:1227px;top:671px;width:34px;height:18px;line-height:18px;color:#222;font-size:12px;letter-spacing:1.6px;overflow:visible">선택</div>
<span class="a car" style="left:1258px;top:675px;border-top-width:6px;border-left-width:4.5px;border-right-width:4.5px"></span>
<div class="a c" style="left:1227px;top:704px;width:34px;height:18px;line-height:18px;color:#222;font-size:12px;letter-spacing:1.6px;overflow:visible">선택</div>
<span class="a car" style="left:1258px;top:708px;border-top-width:6px;border-left-width:4.5px;border-right-width:4.5px"></span>
<div class="a" style="left:1227px;top:731px;width:48px;height:23px;background:#fff"></div>
<div class="a c" style="left:1227px;top:737px;width:34px;height:18px;line-height:18px;color:#222;font-size:12px;letter-spacing:1.6px;overflow:visible">선택</div>
<span class="a car" style="left:1258px;top:741px;border-top-width:6px;border-left-width:4.5px;border-right-width:4.5px"></span>
<div class="a c" style="left:1227px;top:770px;width:34px;height:18px;line-height:18px;color:#222;font-size:12px;letter-spacing:1.6px;overflow:visible">선택</div>
<span class="a car" style="left:1258px;top:774px;border-top-width:6px;border-left-width:4.5px;border-right-width:4.5px"></span>
<div class="a" style="left:1227px;top:796px;width:48px;height:23px;background:#fff"></div>
<div class="a c" style="left:1227px;top:802px;width:34px;height:18px;line-height:18px;color:#222;font-size:12px;letter-spacing:1.6px;overflow:visible">선택</div>
<span class="a car" style="left:1258px;top:806px;border-top-width:6px;border-left-width:4.5px;border-right-width:4.5px"></span>
<div class="a c y" style="left:1227px;top:826px;width:48px;height:25px;line-height:25px;text-align:right;padding-right:6px;color:#222;letter-spacing:0">0.000</div>
<div class="a c y" style="left:1307px;top:499px;width:48px;height:25px;line-height:25px;text-align:right;padding-right:6px;color:#222;letter-spacing:0"></div>
<div class="a c y" style="left:1307px;top:531px;width:48px;height:25px;line-height:25px;text-align:right;padding-right:6px;color:#222;letter-spacing:0">0.000</div>
<div class="a c" style="left:1307px;top:572px;width:34px;height:18px;line-height:18px;color:#222;font-size:12px;letter-spacing:1.6px;overflow:visible">선택</div>
<span class="a car" style="left:1338px;top:576px;border-top-width:6px;border-left-width:4.5px;border-right-width:4.5px"></span>
<div class="a" style="left:1307px;top:599px;width:48px;height:23px;background:#fff"></div>
<div class="a c" style="left:1307px;top:605px;width:34px;height:18px;line-height:18px;color:#222;font-size:12px;letter-spacing:1.6px;overflow:visible">선택</div>
<span class="a car" style="left:1338px;top:609px;border-top-width:6px;border-left-width:4.5px;border-right-width:4.5px"></span>
<div class="a c" style="left:1307px;top:638px;width:34px;height:18px;line-height:18px;color:#222;font-size:12px;letter-spacing:1.6px;overflow:visible">선택</div>
<span class="a car" style="left:1338px;top:642px;border-top-width:6px;border-left-width:4.5px;border-right-width:4.5px"></span>
<div class="a" style="left:1307px;top:665px;width:48px;height:23px;background:#fff"></div>
<div class="a c" style="left:1307px;top:671px;width:34px;height:18px;line-height:18px;color:#222;font-size:12px;letter-spacing:1.6px;overflow:visible">선택</div>
<span class="a car" style="left:1338px;top:675px;border-top-width:6px;border-left-width:4.5px;border-right-width:4.5px"></span>
<div class="a c" style="left:1307px;top:704px;width:34px;height:18px;line-height:18px;color:#222;font-size:12px;letter-spacing:1.6px;overflow:visible">선택</div>
<span class="a car" style="left:1338px;top:708px;border-top-width:6px;border-left-width:4.5px;border-right-width:4.5px"></span>
<div class="a" style="left:1307px;top:731px;width:48px;height:23px;background:#fff"></div>
<div class="a c" style="left:1307px;top:737px;width:34px;height:18px;line-height:18px;color:#222;font-size:12px;letter-spacing:1.6px;overflow:visible">선택</div>
<span class="a car" style="left:1338px;top:741px;border-top-width:6px;border-left-width:4.5px;border-right-width:4.5px"></span>
<div class="a c" style="left:1307px;top:770px;width:34px;height:18px;line-height:18px;color:#222;font-size:12px;letter-spacing:1.6px;overflow:visible">선택</div>
<span class="a car" style="left:1338px;top:774px;border-top-width:6px;border-left-width:4.5px;border-right-width:4.5px"></span>
<div class="a" style="left:1307px;top:796px;width:48px;height:23px;background:#fff"></div>
<div class="a c" style="left:1307px;top:802px;width:34px;height:18px;line-height:18px;color:#222;font-size:12px;letter-spacing:1.6px;overflow:visible">선택</div>
<span class="a car" style="left:1338px;top:806px;border-top-width:6px;border-left-width:4.5px;border-right-width:4.5px"></span>
<div class="a c y" style="left:1307px;top:826px;width:48px;height:25px;line-height:25px;text-align:right;padding-right:6px;color:#222;letter-spacing:0">0.000</div>
<div class="a c y" style="left:1387px;top:499px;width:48px;height:25px;line-height:25px;text-align:right;padding-right:6px;color:#222;letter-spacing:0"></div>
<div class="a c y" style="left:1387px;top:531px;width:48px;height:25px;line-height:25px;text-align:right;padding-right:6px;color:#222;letter-spacing:0">0.000</div>
<div class="a c" style="left:1387px;top:572px;width:34px;height:18px;line-height:18px;color:#222;font-size:12px;letter-spacing:1.6px;overflow:visible">선택</div>
<span class="a car" style="left:1418px;top:576px;border-top-width:6px;border-left-width:4.5px;border-right-width:4.5px"></span>
<div class="a" style="left:1387px;top:599px;width:48px;height:23px;background:#fff"></div>
<div class="a c" style="left:1387px;top:605px;width:34px;height:18px;line-height:18px;color:#222;font-size:12px;letter-spacing:1.6px;overflow:visible">선택</div>
<span class="a car" style="left:1418px;top:609px;border-top-width:6px;border-left-width:4.5px;border-right-width:4.5px"></span>
<div class="a c" style="left:1387px;top:638px;width:34px;height:18px;line-height:18px;color:#222;font-size:12px;letter-spacing:1.6px;overflow:visible">선택</div>
<span class="a car" style="left:1418px;top:642px;border-top-width:6px;border-left-width:4.5px;border-right-width:4.5px"></span>
<div class="a" style="left:1387px;top:665px;width:48px;height:23px;background:#fff"></div>
<div class="a c" style="left:1387px;top:671px;width:34px;height:18px;line-height:18px;color:#222;font-size:12px;letter-spacing:1.6px;overflow:visible">선택</div>
<span class="a car" style="left:1418px;top:675px;border-top-width:6px;border-left-width:4.5px;border-right-width:4.5px"></span>
<div class="a c" style="left:1387px;top:704px;width:34px;height:18px;line-height:18px;color:#222;font-size:12px;letter-spacing:1.6px;overflow:visible">선택</div>
<span class="a car" style="left:1418px;top:708px;border-top-width:6px;border-left-width:4.5px;border-right-width:4.5px"></span>
<div class="a" style="left:1387px;top:731px;width:48px;height:23px;background:#fff"></div>
<div class="a c" style="left:1387px;top:737px;width:34px;height:18px;line-height:18px;color:#222;font-size:12px;letter-spacing:1.6px;overflow:visible">선택</div>
<span class="a car" style="left:1418px;top:741px;border-top-width:6px;border-left-width:4.5px;border-right-width:4.5px"></span>
<div class="a c" style="left:1387px;top:770px;width:34px;height:18px;line-height:18px;color:#222;font-size:12px;letter-spacing:1.6px;overflow:visible">선택</div>
<span class="a car" style="left:1418px;top:774px;border-top-width:6px;border-left-width:4.5px;border-right-width:4.5px"></span>
<div class="a" style="left:1387px;top:796px;width:48px;height:23px;background:#fff"></div>
<div class="a c" style="left:1387px;top:802px;width:34px;height:18px;line-height:18px;color:#222;font-size:12px;letter-spacing:1.6px;overflow:visible">선택</div>
<span class="a car" style="left:1418px;top:806px;border-top-width:6px;border-left-width:4.5px;border-right-width:4.5px"></span>
<div class="a c y" style="left:1387px;top:826px;width:48px;height:25px;line-height:25px;text-align:right;padding-right:6px;color:#222;letter-spacing:0">0.000</div>
<div class="a c y" style="left:1467px;top:499px;width:48px;height:25px;line-height:25px;text-align:right;padding-right:6px;color:#222;letter-spacing:0"></div>
<div class="a c y" style="left:1467px;top:531px;width:48px;height:25px;line-height:25px;text-align:right;padding-right:6px;color:#222;letter-spacing:0">0.000</div>
<div class="a c" style="left:1467px;top:572px;width:34px;height:18px;line-height:18px;color:#222;font-size:12px;letter-spacing:1.6px;overflow:visible">선택</div>
<span class="a car" style="left:1498px;top:576px;border-top-width:6px;border-left-width:4.5px;border-right-width:4.5px"></span>
<div class="a" style="left:1467px;top:599px;width:48px;height:23px;background:#fff"></div>
<div class="a c" style="left:1467px;top:605px;width:34px;height:18px;line-height:18px;color:#222;font-size:12px;letter-spacing:1.6px;overflow:visible">선택</div>
<span class="a car" style="left:1498px;top:609px;border-top-width:6px;border-left-width:4.5px;border-right-width:4.5px"></span>
<div class="a c" style="left:1467px;top:638px;width:34px;height:18px;line-height:18px;color:#222;font-size:12px;letter-spacing:1.6px;overflow:visible">선택</div>
<span class="a car" style="left:1498px;top:642px;border-top-width:6px;border-left-width:4.5px;border-right-width:4.5px"></span>
<div class="a" style="left:1467px;top:665px;width:48px;height:23px;background:#fff"></div>
<div class="a c" style="left:1467px;top:671px;width:34px;height:18px;line-height:18px;color:#222;font-size:12px;letter-spacing:1.6px;overflow:visible">선택</div>
<span class="a car" style="left:1498px;top:675px;border-top-width:6px;border-left-width:4.5px;border-right-width:4.5px"></span>
<div class="a c" style="left:1467px;top:704px;width:34px;height:18px;line-height:18px;color:#222;font-size:12px;letter-spacing:1.6px;overflow:visible">선택</div>
<span class="a car" style="left:1498px;top:708px;border-top-width:6px;border-left-width:4.5px;border-right-width:4.5px"></span>
<div class="a" style="left:1467px;top:731px;width:48px;height:23px;background:#fff"></div>
<div class="a c" style="left:1467px;top:737px;width:34px;height:18px;line-height:18px;color:#222;font-size:12px;letter-spacing:1.6px;overflow:visible">선택</div>
<span class="a car" style="left:1498px;top:741px;border-top-width:6px;border-left-width:4.5px;border-right-width:4.5px"></span>
<div class="a c" style="left:1467px;top:770px;width:34px;height:18px;line-height:18px;color:#222;font-size:12px;letter-spacing:1.6px;overflow:visible">선택</div>
<span class="a car" style="left:1498px;top:774px;border-top-width:6px;border-left-width:4.5px;border-right-width:4.5px"></span>
<div class="a" style="left:1467px;top:796px;width:48px;height:23px;background:#fff"></div>
<div class="a c" style="left:1467px;top:802px;width:34px;height:18px;line-height:18px;color:#222;font-size:12px;letter-spacing:1.6px;overflow:visible">선택</div>
<span class="a car" style="left:1498px;top:806px;border-top-width:6px;border-left-width:4.5px;border-right-width:4.5px"></span>
<div class="a c y" style="left:1467px;top:826px;width:48px;height:25px;line-height:25px;text-align:right;padding-right:6px;color:#222;letter-spacing:0">0.000</div>
<div class="a c y" style="left:1547px;top:499px;width:48px;height:25px;line-height:25px;text-align:right;padding-right:6px;color:#222;letter-spacing:0"></div>
<div class="a c y" style="left:1547px;top:531px;width:48px;height:25px;line-height:25px;text-align:right;padding-right:6px;color:#222;letter-spacing:0">0.000</div>
<div class="a c" style="left:1547px;top:572px;width:34px;height:18px;line-height:18px;color:#222;font-size:12px;letter-spacing:1.6px;overflow:visible">선택</div>
<span class="a car" style="left:1578px;top:576px;border-top-width:6px;border-left-width:4.5px;border-right-width:4.5px"></span>
<div class="a" style="left:1547px;top:599px;width:48px;height:23px;background:#fff"></div>
<div class="a c" style="left:1547px;top:605px;width:34px;height:18px;line-height:18px;color:#222;font-size:12px;letter-spacing:1.6px;overflow:visible">선택</div>
<span class="a car" style="left:1578px;top:609px;border-top-width:6px;border-left-width:4.5px;border-right-width:4.5px"></span>
<div class="a c" style="left:1547px;top:638px;width:34px;height:18px;line-height:18px;color:#222;font-size:12px;letter-spacing:1.6px;overflow:visible">선택</div>
<span class="a car" style="left:1578px;top:642px;border-top-width:6px;border-left-width:4.5px;border-right-width:4.5px"></span>
<div class="a" style="left:1547px;top:665px;width:48px;height:23px;background:#fff"></div>
<div class="a c" style="left:1547px;top:671px;width:34px;height:18px;line-height:18px;color:#222;font-size:12px;letter-spacing:1.6px;overflow:visible">선택</div>
<span class="a car" style="left:1578px;top:675px;border-top-width:6px;border-left-width:4.5px;border-right-width:4.5px"></span>
<div class="a c" style="left:1547px;top:704px;width:34px;height:18px;line-height:18px;color:#222;font-size:12px;letter-spacing:1.6px;overflow:visible">선택</div>
<span class="a car" style="left:1578px;top:708px;border-top-width:6px;border-left-width:4.5px;border-right-width:4.5px"></span>
<div class="a" style="left:1547px;top:731px;width:48px;height:23px;background:#fff"></div>
<div class="a c" style="left:1547px;top:737px;width:34px;height:18px;line-height:18px;color:#222;font-size:12px;letter-spacing:1.6px;overflow:visible">선택</div>
<span class="a car" style="left:1578px;top:741px;border-top-width:6px;border-left-width:4.5px;border-right-width:4.5px"></span>
<div class="a c" style="left:1547px;top:770px;width:34px;height:18px;line-height:18px;color:#222;font-size:12px;letter-spacing:1.6px;overflow:visible">선택</div>
<span class="a car" style="left:1578px;top:774px;border-top-width:6px;border-left-width:4.5px;border-right-width:4.5px"></span>
<div class="a" style="left:1547px;top:796px;width:48px;height:23px;background:#fff"></div>
<div class="a c" style="left:1547px;top:802px;width:34px;height:18px;line-height:18px;color:#222;font-size:12px;letter-spacing:1.6px;overflow:visible">선택</div>
<span class="a car" style="left:1578px;top:806px;border-top-width:6px;border-left-width:4.5px;border-right-width:4.5px"></span>
<div class="a c y" style="left:1547px;top:826px;width:48px;height:25px;line-height:25px;text-align:right;padding-right:6px;color:#222;letter-spacing:0">0.000</div>
<div class="a c y" style="left:1627px;top:499px;width:48px;height:25px;line-height:25px;text-align:right;padding-right:6px;color:#222;letter-spacing:0"></div>
<div class="a c y" style="left:1627px;top:531px;width:48px;height:25px;line-height:25px;text-align:right;padding-right:6px;color:#222;letter-spacing:0">0.000</div>
<div class="a c" style="left:1627px;top:572px;width:34px;height:18px;line-height:18px;color:#222;font-size:12px;letter-spacing:1.6px;overflow:visible">선택</div>
<span class="a car" style="left:1658px;top:576px;border-top-width:6px;border-left-width:4.5px;border-right-width:4.5px"></span>
<div class="a" style="left:1627px;top:599px;width:48px;height:23px;background:#fff"></div>
<div class="a c" style="left:1627px;top:605px;width:34px;height:18px;line-height:18px;color:#222;font-size:12px;letter-spacing:1.6px;overflow:visible">선택</div>
<span class="a car" style="left:1658px;top:609px;border-top-width:6px;border-left-width:4.5px;border-right-width:4.5px"></span>
<div class="a c" style="left:1627px;top:638px;width:34px;height:18px;line-height:18px;color:#222;font-size:12px;letter-spacing:1.6px;overflow:visible">선택</div>
<span class="a car" style="left:1658px;top:642px;border-top-width:6px;border-left-width:4.5px;border-right-width:4.5px"></span>
<div class="a" style="left:1627px;top:665px;width:48px;height:23px;background:#fff"></div>
<div class="a c" style="left:1627px;top:671px;width:34px;height:18px;line-height:18px;color:#222;font-size:12px;letter-spacing:1.6px;overflow:visible">선택</div>
<span class="a car" style="left:1658px;top:675px;border-top-width:6px;border-left-width:4.5px;border-right-width:4.5px"></span>
<div class="a c" style="left:1627px;top:704px;width:34px;height:18px;line-height:18px;color:#222;font-size:12px;letter-spacing:1.6px;overflow:visible">선택</div>
<span class="a car" style="left:1658px;top:708px;border-top-width:6px;border-left-width:4.5px;border-right-width:4.5px"></span>
<div class="a" style="left:1627px;top:731px;width:48px;height:23px;background:#fff"></div>
<div class="a c" style="left:1627px;top:737px;width:34px;height:18px;line-height:18px;color:#222;font-size:12px;letter-spacing:1.6px;overflow:visible">선택</div>
<span class="a car" style="left:1658px;top:741px;border-top-width:6px;border-left-width:4.5px;border-right-width:4.5px"></span>
<div class="a c" style="left:1627px;top:770px;width:34px;height:18px;line-height:18px;color:#222;font-size:12px;letter-spacing:1.6px;overflow:visible">선택</div>
<span class="a car" style="left:1658px;top:774px;border-top-width:6px;border-left-width:4.5px;border-right-width:4.5px"></span>
<div class="a" style="left:1627px;top:796px;width:48px;height:23px;background:#fff"></div>
<div class="a c" style="left:1627px;top:802px;width:34px;height:18px;line-height:18px;color:#222;font-size:12px;letter-spacing:1.6px;overflow:visible">선택</div>
<span class="a car" style="left:1658px;top:806px;border-top-width:6px;border-left-width:4.5px;border-right-width:4.5px"></span>
<div class="a c y" style="left:1627px;top:826px;width:48px;height:25px;line-height:25px;text-align:right;padding-right:6px;color:#222;letter-spacing:0">0.000</div>
<div class="a c y" style="left:1707px;top:499px;width:48px;height:25px;line-height:25px;text-align:right;padding-right:6px;color:#222;letter-spacing:0"></div>
<div class="a c y" style="left:1707px;top:531px;width:48px;height:25px;line-height:25px;text-align:right;padding-right:6px;color:#222;letter-spacing:0">0.000</div>
<div class="a c" style="left:1707px;top:572px;width:34px;height:18px;line-height:18px;color:#222;font-size:12px;letter-spacing:1.6px;overflow:visible">선택</div>
<span class="a car" style="left:1738px;top:576px;border-top-width:6px;border-left-width:4.5px;border-right-width:4.5px"></span>
<div class="a" style="left:1707px;top:599px;width:48px;height:23px;background:#fff"></div>
<div class="a c" style="left:1707px;top:605px;width:34px;height:18px;line-height:18px;color:#222;font-size:12px;letter-spacing:1.6px;overflow:visible">선택</div>
<span class="a car" style="left:1738px;top:609px;border-top-width:6px;border-left-width:4.5px;border-right-width:4.5px"></span>
<div class="a c" style="left:1707px;top:638px;width:34px;height:18px;line-height:18px;color:#222;font-size:12px;letter-spacing:1.6px;overflow:visible">선택</div>
<span class="a car" style="left:1738px;top:642px;border-top-width:6px;border-left-width:4.5px;border-right-width:4.5px"></span>
<div class="a" style="left:1707px;top:665px;width:48px;height:23px;background:#fff"></div>
<div class="a c" style="left:1707px;top:671px;width:34px;height:18px;line-height:18px;color:#222;font-size:12px;letter-spacing:1.6px;overflow:visible">선택</div>
<span class="a car" style="left:1738px;top:675px;border-top-width:6px;border-left-width:4.5px;border-right-width:4.5px"></span>
<div class="a c" style="left:1707px;top:704px;width:34px;height:18px;line-height:18px;color:#222;font-size:12px;letter-spacing:1.6px;overflow:visible">선택</div>
<span class="a car" style="left:1738px;top:708px;border-top-width:6px;border-left-width:4.5px;border-right-width:4.5px"></span>
<div class="a" style="left:1707px;top:731px;width:48px;height:23px;background:#fff"></div>
<div class="a c" style="left:1707px;top:737px;width:34px;height:18px;line-height:18px;color:#222;font-size:12px;letter-spacing:1.6px;overflow:visible">선택</div>
<span class="a car" style="left:1738px;top:741px;border-top-width:6px;border-left-width:4.5px;border-right-width:4.5px"></span>
<div class="a c" style="left:1707px;top:770px;width:34px;height:18px;line-height:18px;color:#222;font-size:12px;letter-spacing:1.6px;overflow:visible">선택</div>
<span class="a car" style="left:1738px;top:774px;border-top-width:6px;border-left-width:4.5px;border-right-width:4.5px"></span>
<div class="a" style="left:1707px;top:796px;width:48px;height:23px;background:#fff"></div>
<div class="a c" style="left:1707px;top:802px;width:34px;height:18px;line-height:18px;color:#222;font-size:12px;letter-spacing:1.6px;overflow:visible">선택</div>
<span class="a car" style="left:1738px;top:806px;border-top-width:6px;border-left-width:4.5px;border-right-width:4.5px"></span>
<div class="a c y" style="left:1707px;top:826px;width:48px;height:25px;line-height:25px;text-align:right;padding-right:6px;color:#222;letter-spacing:0">0.000</div>
<div class="a c y" style="left:1787px;top:499px;width:48px;height:25px;line-height:25px;text-align:right;padding-right:6px;color:#222;letter-spacing:0"></div>
<div class="a c y" style="left:1787px;top:531px;width:48px;height:25px;line-height:25px;text-align:right;padding-right:6px;color:#222;letter-spacing:0">0.000</div>
<div class="a c" style="left:1787px;top:572px;width:34px;height:18px;line-height:18px;color:#222;font-size:12px;letter-spacing:1.6px;overflow:visible">선택</div>
<span class="a car" style="left:1818px;top:576px;border-top-width:6px;border-left-width:4.5px;border-right-width:4.5px"></span>
<div class="a" style="left:1787px;top:599px;width:48px;height:23px;background:#fff"></div>
<div class="a c" style="left:1787px;top:605px;width:34px;height:18px;line-height:18px;color:#222;font-size:12px;letter-spacing:1.6px;overflow:visible">선택</div>
<span class="a car" style="left:1818px;top:609px;border-top-width:6px;border-left-width:4.5px;border-right-width:4.5px"></span>
<div class="a c" style="left:1787px;top:638px;width:34px;height:18px;line-height:18px;color:#222;font-size:12px;letter-spacing:1.6px;overflow:visible">선택</div>
<span class="a car" style="left:1818px;top:642px;border-top-width:6px;border-left-width:4.5px;border-right-width:4.5px"></span>
<div class="a" style="left:1787px;top:665px;width:48px;height:23px;background:#fff"></div>
<div class="a c" style="left:1787px;top:671px;width:34px;height:18px;line-height:18px;color:#222;font-size:12px;letter-spacing:1.6px;overflow:visible">선택</div>
<span class="a car" style="left:1818px;top:675px;border-top-width:6px;border-left-width:4.5px;border-right-width:4.5px"></span>
<div class="a c" style="left:1787px;top:704px;width:34px;height:18px;line-height:18px;color:#222;font-size:12px;letter-spacing:1.6px;overflow:visible">선택</div>
<span class="a car" style="left:1818px;top:708px;border-top-width:6px;border-left-width:4.5px;border-right-width:4.5px"></span>
<div class="a" style="left:1787px;top:731px;width:48px;height:23px;background:#fff"></div>
<div class="a c" style="left:1787px;top:737px;width:34px;height:18px;line-height:18px;color:#222;font-size:12px;letter-spacing:1.6px;overflow:visible">선택</div>
<span class="a car" style="left:1818px;top:741px;border-top-width:6px;border-left-width:4.5px;border-right-width:4.5px"></span>
<div class="a c" style="left:1787px;top:770px;width:34px;height:18px;line-height:18px;color:#222;font-size:12px;letter-spacing:1.6px;overflow:visible">선택</div>
<span class="a car" style="left:1818px;top:774px;border-top-width:6px;border-left-width:4.5px;border-right-width:4.5px"></span>
<div class="a" style="left:1787px;top:796px;width:48px;height:23px;background:#fff"></div>
<div class="a c" style="left:1787px;top:802px;width:34px;height:18px;line-height:18px;color:#222;font-size:12px;letter-spacing:1.6px;overflow:visible">선택</div>
<span class="a car" style="left:1818px;top:806px;border-top-width:6px;border-left-width:4.5px;border-right-width:4.5px"></span>
<div class="a c y" style="left:1787px;top:826px;width:48px;height:25px;line-height:25px;text-align:right;padding-right:6px;color:#222;letter-spacing:0">0.000</div>
<div class="a c" style="left:844px;top:501px;width:49px;height:20px;line-height:20px;color:#222;">0</div>
<div class="a c" style="left:895px;top:501px;width:78px;height:20px;line-height:20px;color:#222;">-</div>
<div class="a c" style="left:844px;top:533px;width:49px;height:20px;line-height:20px;color:#222;">1</div>
<div class="a c" style="left:895px;top:533px;width:78px;height:20px;line-height:20px;color:#222;">치수(1)</div>
<div class="a c" style="left:975px;top:533px;width:36px;height:20px;line-height:20px;color:#222;text-align:left;padding-left:15px;">3…</div>
<div class="a c" style="left:1013px;top:533px;width:37px;height:20px;line-height:20px;color:#222;text-align:right;padding-right:4.5px;">3…</div>
<div class="a c" style="left:844px;top:598px;width:49px;height:20px;line-height:20px;color:#222;">10</div>
<div class="a c" style="left:895px;top:598px;width:78px;height:20px;line-height:20px;color:#222;text-align:left;padding-left:16px;">외관(F…</div>
<div class="a c" style="left:975px;top:598px;width:75px;height:20px;line-height:20px;color:#222;text-align:left;padding-left:15px;">1~24…</div>
<div class="a c" style="left:844px;top:631px;width:49px;height:20px;line-height:20px;color:#222;">11</div>
<div class="a c" style="left:895px;top:631px;width:78px;height:20px;line-height:20px;color:#222;text-align:left;padding-left:16px;">외관(T…</div>
<div class="a c" style="left:975px;top:631px;width:75px;height:20px;line-height:20px;color:#222;text-align:left;padding-left:15px;">X≤3m…</div>
<div class="a c" style="left:844px;top:664px;width:49px;height:20px;line-height:20px;color:#222;">12</div>
<div class="a c" style="left:895px;top:664px;width:78px;height:20px;line-height:20px;color:#222;text-align:left;padding-left:16px;">외관(T…</div>
<div class="a c" style="left:975px;top:664px;width:75px;height:20px;line-height:20px;color:#222;text-align:left;padding-left:15px;">이상 …</div>
<div class="a c" style="left:844px;top:697px;width:49px;height:20px;line-height:20px;color:#222;">13</div>
<div class="a c" style="left:895px;top:697px;width:78px;height:20px;line-height:20px;color:#222;text-align:left;padding-left:16px;">외관(P…</div>
<div class="a c" style="left:975px;top:697px;width:75px;height:20px;line-height:20px;color:#222;text-align:left;padding-left:15px;">PS, F…</div>
<div class="a c" style="left:844px;top:730px;width:49px;height:20px;line-height:20px;color:#222;">14</div>
<div class="a c" style="left:895px;top:730px;width:78px;height:20px;line-height:20px;color:#222;text-align:left;padding-left:16px;">외관(…</div>
<div class="a c" style="left:975px;top:730px;width:75px;height:20px;line-height:20px;color:#222;text-align:left;padding-left:15px;">부품 L…</div>
<div class="a c" style="left:844px;top:763px;width:49px;height:20px;line-height:20px;color:#222;">15</div>
<div class="a c" style="left:895px;top:763px;width:78px;height:20px;line-height:20px;color:#222;text-align:left;padding-left:16px;">외관(…</div>
<div class="a c" style="left:975px;top:763px;width:75px;height:20px;line-height:20px;color:#222;text-align:left;padding-left:15px;">상대…</div>
<div class="a c" style="left:844px;top:795px;width:49px;height:20px;line-height:20px;color:#222;">16</div>
<div class="a c" style="left:895px;top:795px;width:78px;height:20px;line-height:20px;color:#222;text-align:left;padding-left:16px;">포장(…</div>
<div class="a c" style="left:975px;top:795px;width:75px;height:20px;line-height:20px;color:#222;text-align:left;padding-left:15px;">진공…</div>
<div class="a c" style="left:844px;top:828px;width:49px;height:20px;line-height:20px;color:#222;">2</div>
<div class="a c" style="left:895px;top:828px;width:78px;height:20px;line-height:20px;color:#222;">치수(2)</div>
<div class="a c" style="left:975px;top:828px;width:36px;height:20px;line-height:20px;color:#222;text-align:left;padding-left:15px;">3…</div>
<div class="a c" style="left:1013px;top:828px;width:37px;height:20px;line-height:20px;color:#222;text-align:right;padding-right:4.5px;">3…</div>
<div class="a c" style="left:1013px;top:565px;width:37px;height:20px;line-height:20px;color:#222;text-align:right;padding-right:4.5px;">3…</div>
<div class="a" style="left:1850px;top:495px;width:18px;height:361px;background:#f1f1f1"></div>
<div class="a" style="left:1853px;top:512px;width:13px;height:185px;background:#c1c1c1"></div>
<svg class="a" style="left:1855px;top:499px" width="9" height="9" viewBox="0 0 9 9"><path d="M4.5 2 L8 6 H1Z" fill="#a3a3a3"/></svg>
<svg class="a" style="left:1855px;top:843px" width="9" height="9" viewBox="0 0 9 9"><path d="M4.5 7 L8 3 H1Z" fill="#505050"/></svg>
<svg class="a" style="left:1258px;top:620px;opacity:.72" width="200" height="50" viewBox="0 0 200 50"><path d="M23 3 L41 12 V34 L23 46 L5 36 V12Z" fill="#a9c6ea" opacity=".75"/><circle cx="22" cy="18" r="7" fill="#fff"/><circle cx="13" cy="31" r="3" fill="#fff"/><circle cx="31" cy="33" r="4" fill="#fff"/><path d="M22 18 L13 31 M22 18 L31 33" stroke="#fff" stroke-width="2"/><text x="51" y="24" font-size="25" font-weight="bold" fill="#8c8c8c" textLength="130" lengthAdjust="spacingAndGlyphs" style="letter-spacing:0">webPonent</text><text x="55" y="40" font-size="15" fill="#8db4e6" textLength="89" lengthAdjust="spacingAndGlyphs" style="letter-spacing:0">Trial Version</text><text x="183" y="12" font-size="9" fill="#999" style="letter-spacing:0">©</text></svg>
<div class="a btn" style="left:1682px;top:875px;width:44px;height:30px;line-height:27px;background:linear-gradient(#3073ae,#265a88);border:1px solid #204d74;color:#fff;border-radius:3.5px;font-size:13px">신규</div>
<div class="a btn" style="left:1729px;top:875px;width:45px;height:30px;line-height:27px;background:linear-gradient(#fff,#e0e0e0);border:1px solid #ccc;color:#333;border-radius:3.5px;font-size:13px">저장</div>
<div class="a btn" style="left:1777px;top:875px;width:44px;height:30px;line-height:27px;background:linear-gradient(#d9534f,#c12e2a);border:1px solid #b92c28;color:#fff;border-radius:3.5px;font-size:13px">삭제</div>
<div class="a btn" style="left:1824px;top:875px;width:45px;height:30px;line-height:27px;background:linear-gradient(#5cb85c,#419641);border:1px solid #3e8f3e;color:#fff;border-radius:3.5px;font-size:13px">출력</div>
</body></html>
